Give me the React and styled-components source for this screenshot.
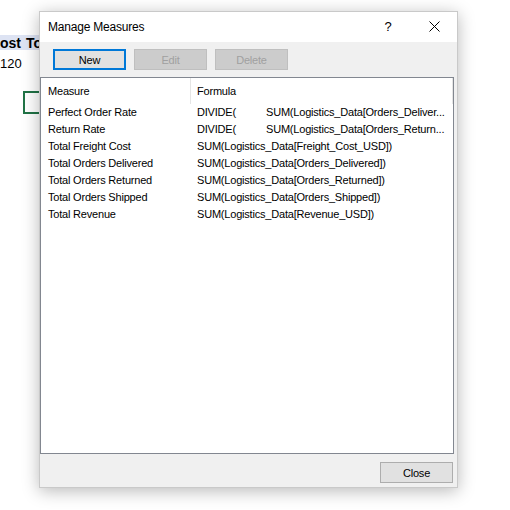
import React from 'react'
import styled, { createGlobalStyle } from 'styled-components'

const GlobalStyle = createGlobalStyle`
  html, body {
    margin: 0;
    padding: 0;
    background: #ffffff;
  }
  body {
    width: 510px;
    height: 510px;
    overflow: hidden;
    font-family: "Liberation Sans", Arial, sans-serif;
  }
`

const Page = styled.div`
  position: relative;
  width: 510px;
  height: 510px;
  overflow: hidden;
`

// spreadsheet peeking out behind the dialog
const Sheet = styled.div`
  display: grid;
  grid-template-columns: 23px 1fr;
  grid-template-rows: 35px 15px 26px 15px 23px;
  width: 120px;
`

const Cell = styled.div`
  display: flex;
  align-items: center;
  white-space: nowrap;
  overflow: hidden;
  font-size: ${p => (p.head ? '14px' : '13px')};
  font-weight: ${p => (p.head ? 'bold' : 'normal')};
  color: #000;
  background: ${p => (p.head ? '#dde3f3' : 'transparent')};
  padding-left: ${p => (p.pad ? '3px' : '0')};
`

const Selected = styled.div`
  grid-column: 2;
  grid-row: 5;
  border: 2px solid #217346;
  border-right: none;
`

const Dialog = styled.div`
  position: absolute;
  left: 39px;
  top: 11px;
  width: 419px;
  height: 477px;
  box-sizing: border-box;
  border: 1px solid rgba(0, 0, 0, 0.16);
  background: #f0f0f0;
  box-shadow: 0 3px 16px rgba(0, 0, 0, 0.28);
  display: flex;
  flex-direction: column;
`

const TitleBar = styled.div`
  height: 30px;
  background: #ffffff;
  display: flex;
  align-items: center;
  padding-left: 8px;
`

const Title = styled.span`
  flex: 1;
  font-size: 12px;
  letter-spacing: -0.2px;
  color: #000;
`

const CaptionButton = styled.div`
  width: 46px;
  height: 30px;
  display: flex;
  align-items: center;
  justify-content: center;
  font-size: 13px;
  color: #000;
  padding-bottom: 2px;
  box-sizing: border-box;
`

const Toolbar = styled.div`
  display: flex;
  gap: 8px;
  padding: 7px 0 7px 13px;
`

const Button = styled.div`
  width: 73px;
  height: 21px;
  box-sizing: border-box;
  display: flex;
  align-items: center;
  justify-content: center;
  font-size: 11px;
  letter-spacing: -0.2px;
  background: ${p => (p.disabled ? '#cccccc' : '#e1e1e1')};
  color: ${p => (p.disabled ? '#a0a0a0' : '#000')};
  border: ${p =>
    p.focused ? '2px solid #0078d7' : p.disabled ? '1px solid #bfbfbf' : '1px solid #adadad'};
`

const List = styled.div`
  flex: 1;
  margin-right: 3px;
  background: #ffffff;
  border: 1px solid #828790;
  font-size: 11px;
  letter-spacing: -0.2px;
  color: #000;
`

const HeaderRow = styled.div`
  display: flex;
  height: 26px;
`

const HeaderCell = styled.div`
  width: ${p => p.w}px;
  flex: ${p => (p.w ? 'none' : '1')};
  display: flex;
  align-items: center;
  box-sizing: border-box;
  padding-left: ${p => p.pad || 0}px;
  border-right: ${p => (p.w ? '1px solid #e5e5e5' : 'none')};
`

const Row = styled.div`
  display: flex;
  height: 17px;
  line-height: 17px;
  white-space: nowrap;
`

const NameCell = styled.div`
  width: 150px;
  box-sizing: border-box;
  padding-left: 7px;
  overflow: hidden;
`

const FormulaCell = styled.div`
  width: 258px;
  box-sizing: border-box;
  padding-left: 6px;
  overflow: hidden;
`

const TabStop = styled.span`
  display: inline-block;
  width: 69px;
`

const Footer = styled.div`
  display: flex;
  justify-content: flex-end;
  padding: 8px 4px 4px 0;
`

const CloseIcon = () => (
  <svg width="11" height="11" viewBox="0 0 11 11">
    <path d="M0.5 0.5 L10.5 10.5 M10.5 0.5 L0.5 10.5" stroke="#000" strokeWidth="1" fill="none" />
  </svg>
)

const measures = [
  { name: 'Perfect Order Rate', pre: 'DIVIDE(', formula: 'SUM(Logistics_Data[Orders_Deliver...' },
  { name: 'Return Rate', pre: 'DIVIDE(', formula: 'SUM(Logistics_Data[Orders_Return...' },
  { name: 'Total Freight Cost', formula: 'SUM(Logistics_Data[Freight_Cost_USD])' },
  { name: 'Total Orders Delivered', formula: 'SUM(Logistics_Data[Orders_Delivered])' },
  { name: 'Total Orders Returned', formula: 'SUM(Logistics_Data[Orders_Returned])' },
  { name: 'Total Orders Shipped', formula: 'SUM(Logistics_Data[Orders_Shipped])' },
  { name: 'Total Revenue', formula: 'SUM(Logistics_Data[Revenue_USD])' }
]

const App = () => (
  <Page>
    <GlobalStyle />
    <Sheet>
      <Cell />
      <Cell />
      <Cell head>ost</Cell>
      <Cell head pad>To</Cell>
      <Cell>120</Cell>
      <Cell />
      <Cell />
      <Cell />
      <Cell />
      <Selected />
    </Sheet>

    <Dialog>
      <TitleBar>
        <Title>Manage Measures</Title>
        <CaptionButton>?</CaptionButton>
        <CaptionButton><CloseIcon /></CaptionButton>
      </TitleBar>
      <Toolbar>
        <Button focused>New</Button>
        <Button disabled>Edit</Button>
        <Button disabled>Delete</Button>
      </Toolbar>
      <List>
        <HeaderRow>
          <HeaderCell w={150} pad={7}>Measure</HeaderCell>
          <HeaderCell w={262} pad={6}>Formula</HeaderCell>
          <HeaderCell />
        </HeaderRow>
        {measures.map(m => (
          <Row key={m.name}>
            <NameCell>{m.name}</NameCell>
            <FormulaCell>
              {m.pre && <TabStop>{m.pre}</TabStop>}
              {m.formula}
            </FormulaCell>
          </Row>
        ))}
      </List>
      <Footer>
        <Button>Close</Button>
      </Footer>
    </Dialog>
  </Page>
)

export default App
